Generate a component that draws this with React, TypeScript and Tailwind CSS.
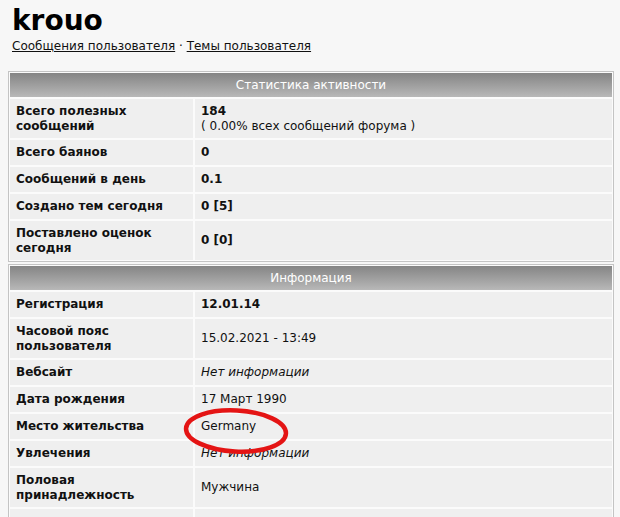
type Row = { label: string; value: React.ReactNode; tall?: boolean; mark?: boolean };

const stats: Row[] = [
    {
        label: "Всего полезных сообщений",
        tall: true,
        value: (
            <>
                <b>184</b>
                <br />( 0.00% всех сообщений форума )
            </>
        ),
    },
    { label: "Всего баянов", value: <b>0</b> },
    { label: "Сообщений в день", value: <b>0.1</b> },
    { label: "Создано тем сегодня", value: <b>0 [5]</b> },
    { label: "Поставлено оценок сегодня", tall: true, value: <b>0 [0]</b> },
];

const info: Row[] = [
    { label: "Регистрация", value: <b>12.01.14</b> },
    { label: "Часовой пояс пользователя", tall: true, value: "15.02.2021 - 13:49" },
    { label: "Вебсайт", value: <i>Нет информации</i> },
    { label: "Дата рождения", value: "17 Март 1990" },
    { label: "Место жительства", value: "Germany", mark: true },
    { label: "Увлечения", value: <i>Нет информации</i> },
    { label: "Половая принадлежность", tall: true, value: "Мужчина" },
    { label: "", value: "" },
];

function Block({ title, rows }: { title: string; rows: Row[] }) {
    return (
        <div className="border border-[#c4c4c4] bg-[#fbfbfb] p-px">
            <div className="h-[24px] bg-gradient-to-b from-[#858585] to-[#b8b8b8] text-center text-[12px] leading-[24px] text-white">
                {title}
            </div>
            <div className="mt-[2px] grid grid-cols-[183px_1fr] gap-[2px]">
                {rows.map((r, i) => (
                    <div key={i} className="contents">
                        <div
                            className={`flex items-center bg-[#efefef] px-[6px] font-bold leading-[15px] ${
                                r.tall ? "h-[39px] pr-[40px]" : "h-[25px]"
                            }`}
                        >
                            {r.label}
                        </div>
                        <div className="relative flex items-center bg-[#efefef] px-[6px] leading-[15px]">
                            <div>{r.value}</div>
                            {r.mark && (
                                <svg
                                    className="pointer-events-none absolute left-[-12px] top-[-7px] z-10"
                                    width="108"
                                    height="48"
                                    viewBox="0 0 108 48"
                                >
                                    <ellipse
                                        cx="53"
                                        cy="24"
                                        rx="50"
                                        ry="20.5"
                                        fill="none"
                                        stroke="#e41414"
                                        strokeWidth="4.5"
                                        transform="rotate(3 53 24)"
                                    />
                                </svg>
                            )}
                        </div>
                    </div>
                ))}
            </div>
        </div>
    );
}

export default function App() {
    return (
        <div className="min-h-screen bg-[#f7f7f7] px-[8px] text-[12px] text-[#111] [font-family:'DejaVu_Sans',Verdana,sans-serif]">
            <div className="px-[4px] pt-[4px]">
                <h1 className="text-[28px] font-bold leading-[34px] text-black">krouo</h1>
                <div className="text-[12px] leading-[16px]">
                    <a href="#" className="underline">
                        Сообщения пользователя
                    </a>{" "}
                    ·{" "}
                    <a href="#" className="underline">
                        Темы пользователя
                    </a>
                </div>
            </div>
            <div className="mt-[17px] mr-[-2px]">
                <Block title="Статистика активности" rows={stats} />
            </div>
            <div className="mt-[2px] mr-[-2px]">
                <Block title="Информация" rows={info} />
            </div>
        </div>
    );
}
